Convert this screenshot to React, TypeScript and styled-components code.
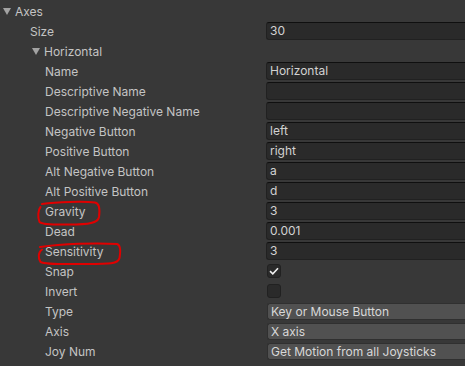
import React from 'react';
import styled, { createGlobalStyle } from 'styled-components';

const GlobalStyle = createGlobalStyle`
  html, body {
    margin: 0;
    padding: 0;
    background: #383838;
    overflow: hidden;
  }
  body {
    font-family: Inter, "Noto Sans", sans-serif;
    font-size: 12px;
    color: #c4c4c4;
  }
`;

type Kind = 'text' | 'check' | 'enum';

interface Field {
  label: string;
  kind: Kind;
  value?: string;
  checked?: boolean;
  circled?: 'short' | 'long';
}

const fields: Field[] = [
  { label: 'Name', kind: 'text', value: 'Horizontal' },
  { label: 'Descriptive Name', kind: 'text', value: '' },
  { label: 'Descriptive Negative Name', kind: 'text', value: '' },
  { label: 'Negative Button', kind: 'text', value: 'left' },
  { label: 'Positive Button', kind: 'text', value: 'right' },
  { label: 'Alt Negative Button', kind: 'text', value: 'a' },
  { label: 'Alt Positive Button', kind: 'text', value: 'd' },
  { label: 'Gravity', kind: 'text', value: '3', circled: 'short' },
  { label: 'Dead', kind: 'text', value: '0.001' },
  { label: 'Sensitivity', kind: 'text', value: '3', circled: 'long' },
  { label: 'Snap', kind: 'check', checked: true },
  { label: 'Invert', kind: 'check', checked: false },
  { label: 'Type', kind: 'enum', value: 'Key or Mouse Button' },
  { label: 'Axis', kind: 'enum', value: 'X axis' },
  { label: 'Joy Num', kind: 'enum', value: 'Get Motion from all Joysticks' },
];

function Inspector() {
  return (
    <Panel>
      <Row>
        <LabelCell $indent={3}>
          <Arrow />
          <span>Axes</span>
        </LabelCell>
      </Row>
      <Row>
        <LabelCell $indent={30}>Size</LabelCell>
        <TextField>30</TextField>
      </Row>
      <Row>
        <LabelCell $indent={32}>
          <Arrow />
          <span>Horizontal</span>
        </LabelCell>
      </Row>
      {fields.map((f) => (
        <Row key={f.label}>
          <LabelCell $indent={45}>
            {f.label}
            {f.circled === 'short' && (
              <Circle width="64" height="25" viewBox="0 0 64 25" style={{ left: 37, top: 0 }}>
                <path
                  d="M5 3 C20 1 46 0 58 1.5 C63 2.5 63 9 62 16 C61 22 52 23.5 32 23.5 C18 23.5 6 24 2.5 21 C0.5 16 1 9 3.5 6"
                  fill="none"
                  stroke="#e00000"
                  strokeWidth="2"
                  strokeLinecap="round"
                />
              </Circle>
            )}
            {f.circled === 'long' && (
              <Circle width="85" height="24" viewBox="0 0 85 24" style={{ left: 37, top: 1 }}>
                <path
                  d="M3 5 C25 2 58 0.5 80 2 C84 3 83.5 10 82.5 16 C81.5 22 72 22 50 22 C30 22 10 23 3.5 20 C0.8 16 1.2 10 5 7.5"
                  fill="none"
                  stroke="#e00000"
                  strokeWidth="2"
                  strokeLinecap="round"
                />
              </Circle>
            )}
          </LabelCell>
          {f.kind === 'text' && <TextField>{f.value}</TextField>}
          {f.kind === 'check' && (
            <CheckCell>
              <CheckBox>
                {f.checked && (
                  <svg width="10" height="8" viewBox="0 0 10 8">
                    <path d="M1 4.2 L3.8 6.8 L9 1.2" fill="none" stroke="#f0f0f0" strokeWidth="1.6" />
                  </svg>
                )}
              </CheckBox>
            </CheckCell>
          )}
          {f.kind === 'enum' && <EnumField>{f.value}</EnumField>}
        </Row>
      ))}
    </Panel>
  );
}

export default function App() {
  return (
    <>
      <GlobalStyle />
      <Inspector />
    </>
  );
}

const Panel = styled.div`
  display: flex;
  flex-direction: column;
  padding-top: 1px;
  width: 470px;
`;

const Row = styled.div`
  display: grid;
  grid-template-columns: 266px 1fr;
  height: 20px;
  align-items: center;
`;

const LabelCell = styled.div<{ $indent: number }>`
  position: relative;
  display: flex;
  align-items: center;
  gap: 4px;
  height: 20px;
  box-sizing: border-box;
  padding-left: ${(p) => p.$indent}px;
  padding-top: 1px;
  line-height: 19px;
  white-space: nowrap;
  color: #c4c4c4;
`;

const Arrow = styled.span`
  display: inline-block;
  width: 0;
  height: 0;
  border-left: 4px solid transparent;
  border-right: 4px solid transparent;
  border-top: 7px solid #a3a3a3;
`;

const Circle = styled.svg`
  position: absolute;
  pointer-events: none;
  overflow: visible;
`;

const TextField = styled.div`
  height: 18px;
  box-sizing: border-box;
  background: #2a2a2a;
  border: 1px solid #212121;
  border-top-color: #0f0f0f;
  border-right: none;
  border-radius: 3px 0 0 3px;
  padding: 0 3px;
  line-height: 16px;
  color: #d2d2d2;
  font-size: 12px;
  white-space: nowrap;
  overflow: hidden;
`;

const EnumField = styled(TextField)`
  height: 17px;
  margin-left: 1px;
  background: #515151;
  border-color: #303030;
  border-top-color: #303030;
  line-height: 15px;
  color: #d8d8d8;
`;

const CheckCell = styled.div`
  display: flex;
  align-items: center;
`;

const CheckBox = styled.div`
  width: 14px;
  height: 14px;
  margin-left: 1px;
  box-sizing: border-box;
  background: #2a2a2a;
  border: 1px solid #212121;
  border-radius: 3px;
  display: flex;
  align-items: center;
  justify-content: center;
`;
